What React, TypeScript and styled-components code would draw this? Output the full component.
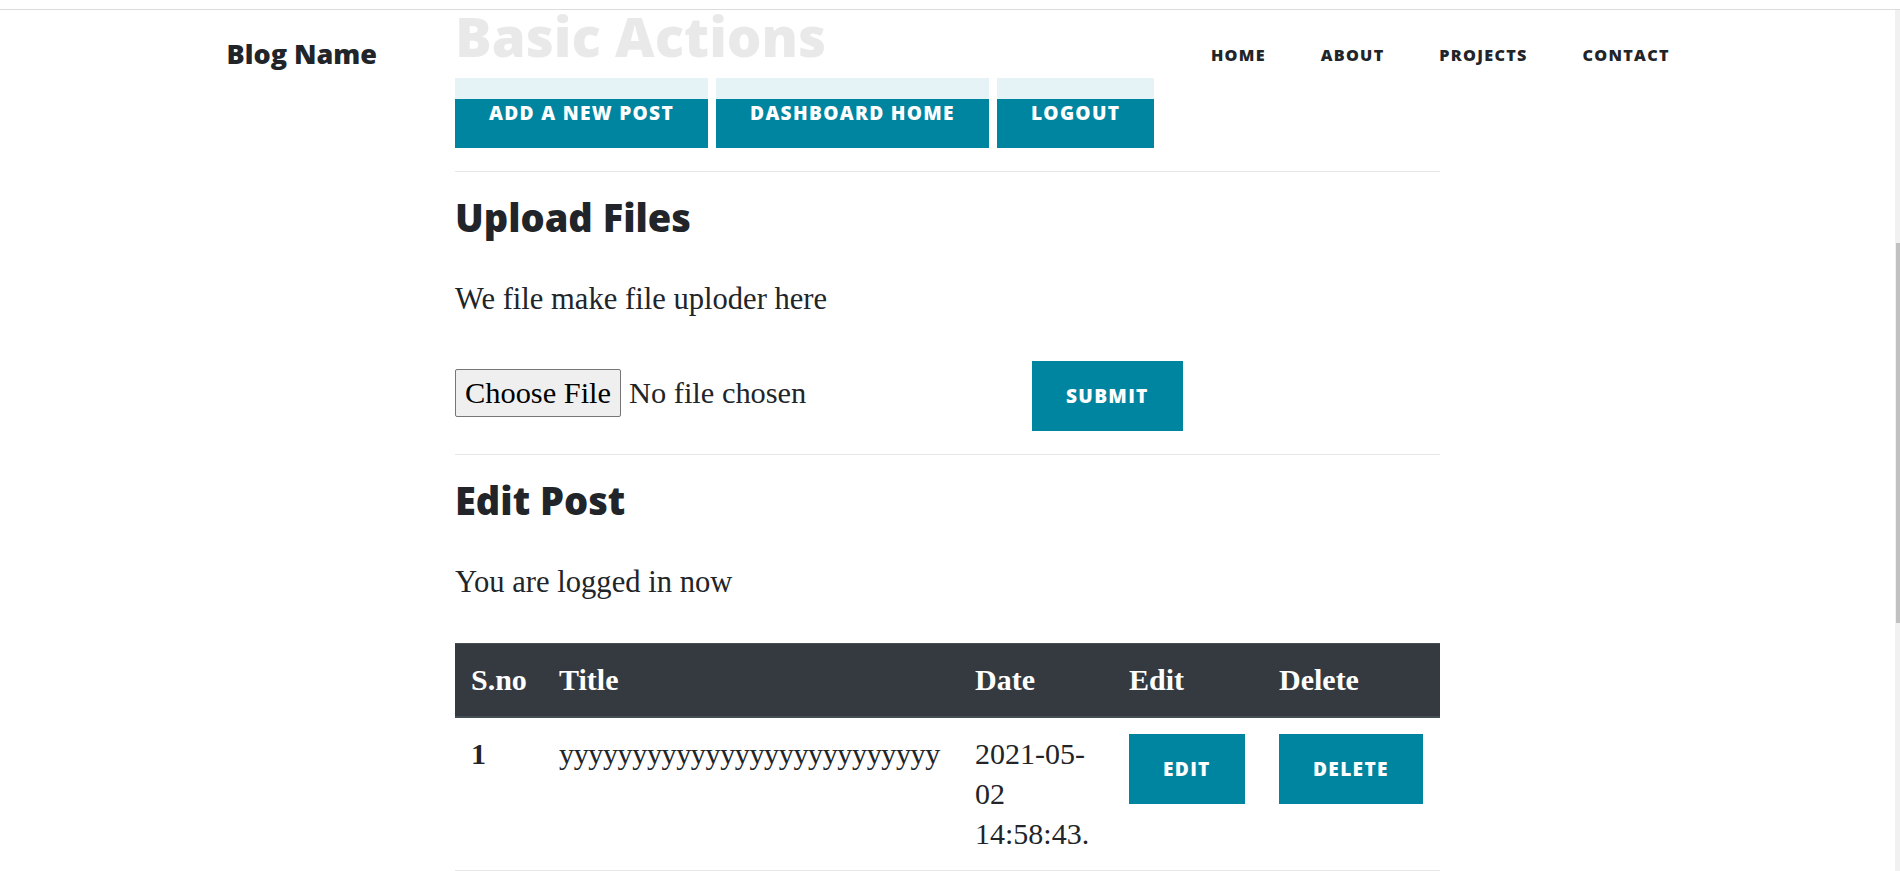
import React from "react";
import styled, { createGlobalStyle } from "styled-components";

const TEAL = "#0085a1";
const INK = "#212529";

const GlobalStyle = createGlobalStyle`
  html, body {
    margin: 0;
    padding: 0;
    height: 100%;
    overflow: hidden;
    background: #ffffff;
  }
  body {
    font-family: "Liberation Serif", "Times New Roman", serif;
    color: ${INK};
  }
  * { box-sizing: border-box; }
`;

const Frame = styled.div`
  height: 100vh;
  display: flex;
  flex-direction: column;
`;

const TopStrip = styled.div`
  height: 10px;
  flex: none;
  background: #ffffff;
  border-bottom: 1px solid #dcdcdc;
`;

const Body = styled.div`
  flex: 1;
  min-height: 0;
  display: flex;
`;

const Viewport = styled.div`
  flex: 1;
  position: relative;
  overflow: hidden;
`;

const ScrollTrack = styled.div`
  width: 5px;
  flex: none;
  background: #f1f1f1;
  display: flex;
  flex-direction: column;
  align-items: flex-end;
`;

const ScrollThumb = styled.div`
  width: 4px;
  height: 380px;
  margin-top: 233px;
  background: #c1c1c1;
`;

const NavBar = styled.nav`
  position: absolute;
  top: 0;
  left: 0;
  right: 0;
  height: 89px;
  background: rgba(255, 255, 255, 0.9);
  z-index: 10;
`;

const NavInner = styled.div`
  width: 1442px;
  height: 100%;
  margin: 0 auto;
  display: flex;
  align-items: center;
  justify-content: space-between;
`;

const Brand = styled.a`
  font-family: "Open Sans", "Liberation Sans", sans-serif;
  font-weight: 800;
  font-size: 27px;
  line-height: 1;
  color: ${INK};
  text-decoration: none;
  margin-bottom: 3px;
`;

const NavList = styled.ul`
  list-style: none;
  margin: 0;
  padding: 0;
  display: flex;
  gap: 56px;
`;

const NavLink = styled.a`
  font-family: "Open Sans", "Liberation Sans", sans-serif;
  font-weight: 800;
  font-size: 16.2px;
  letter-spacing: 1.3px;
  text-transform: uppercase;
  color: ${INK};
  text-decoration: none;
  margin-right: -1.3px;
`;

const Content = styled.main`
  width: 985px;
  margin: 0 auto;
`;

const PageTitle = styled.h1`
  font-family: "Open Sans", "Liberation Sans", sans-serif;
  font-weight: 800;
  font-size: 54.5px;
  line-height: 53px;
  margin: 0;
  color: ${INK};
`;

const ActionRow = styled.div`
  display: flex;
  gap: 8px;
  margin-top: 15px;
`;

const Button = styled.button`
  height: 70px;
  padding: 0 34px;
  display: inline-flex;
  align-items: center;
  justify-content: center;
  vertical-align: top;
  border: none;
  border-radius: 0;
  background: ${TEAL};
  color: #ffffff;
  font-family: "Open Sans", "Liberation Sans", sans-serif;
  font-weight: 800;
  font-size: 19.15px;
  letter-spacing: 1.3px;
  text-transform: uppercase;
  cursor: pointer;
  white-space: nowrap;
`;

const Rule = styled.hr`
  margin: 23px 0 0;
  border: 0;
  border-top: 1px solid #e6e6e6;
  height: 0;
`;

const SectionTitle = styled.h2`
  font-family: "Open Sans", "Liberation Sans", sans-serif;
  font-weight: 800;
  font-size: 38px;
  line-height: 48px;
  margin: 21px 0 0;
  color: ${INK};
`;

const Text = styled.p`
  font-size: 30.6px;
  line-height: 40px;
  margin: 38px 0 0;
`;

const UploadForm = styled.form`
  display: flex;
  align-items: flex-start;
  gap: 4px;
  margin-top: 42px;
`;

const FileInput = styled.input.attrs({ type: "file" })`
  width: 573px;
  height: 48px;
  margin-top: 8px;
  font-family: "Liberation Serif", "Times New Roman", serif;
  font-size: 30.4px;
  line-height: 46px;
  color: ${INK};

  &::file-selector-button {
    height: 48px;
    padding: 0 9px;
    margin-right: 8px;
    border: 1px solid #767676;
    border-radius: 2px;
    background: #efefef;
    color: #000000;
    font: inherit;
  }
`;

const PostTable = styled.table`
  width: 100%;
  margin-top: 41px;
  border-collapse: collapse;
  table-layout: fixed;
`;

const HeadCell = styled.th`
  background: #343a40;
  color: #ffffff;
  font-weight: 700;
  font-size: 30px;
  line-height: 40px;
  padding: 16px;
  text-align: left;
  border-top: 1px solid #454d55;
  border-bottom: 2px solid #454d55;
`;

const Cell = styled.td<{ $bold?: boolean; $tight?: boolean }>`
  font-size: 30px;
  line-height: 40px;
  padding: 16px;
  vertical-align: top;
  font-weight: ${(p) => (p.$bold ? 700 : 400)};
  letter-spacing: ${(p) => (p.$tight ? "-0.35px" : "normal")};
  border-bottom: 1px solid #e6e6e6;
`;

const columns = [
  { label: "S.no", width: 88 },
  { label: "Title", width: 416 },
  { label: "Date", width: 154 },
  { label: "Edit", width: 150 },
  { label: "Delete", width: 177 },
];

const navItems = ["Home", "About", "Projects", "Contact"];

export default function App() {
  return (
    <>
      <GlobalStyle />
      <Frame>
        <TopStrip />
        <Body>
          <Viewport>
            <NavBar>
              <NavInner>
                <Brand href="#">Blog Name</Brand>
                <NavList>
                  {navItems.map((item) => (
                    <li key={item}>
                      <NavLink href="#">{item}</NavLink>
                    </li>
                  ))}
                </NavList>
              </NavInner>
            </NavBar>
            <Content>
              <PageTitle>Basic Actions</PageTitle>
              <ActionRow>
                <Button>Add a new post</Button>
                <Button>Dashboard Home</Button>
                <Button>Logout</Button>
              </ActionRow>
              <Rule />
              <SectionTitle>Upload Files</SectionTitle>
              <Text>We file make file uploder here</Text>
              <UploadForm onSubmit={(e) => e.preventDefault()}>
                <FileInput />
                <Button type="submit">Submit</Button>
              </UploadForm>
              <Rule />
              <SectionTitle>Edit Post</SectionTitle>
              <Text>You are logged in now</Text>
              <PostTable>
                <colgroup>
                  {columns.map((c) => (
                    <col key={c.label} style={{ width: c.width }} />
                  ))}
                </colgroup>
                <thead>
                  <tr>
                    {columns.map((c) => (
                      <HeadCell key={c.label}>{c.label}</HeadCell>
                    ))}
                  </tr>
                </thead>
                <tbody>
                  <tr>
                    <Cell $bold>1</Cell>
                    <Cell $tight>yyyyyyyyyyyyyyyyyyyyyyyyyy</Cell>
                    <Cell>2021-05-02 14:58:43.</Cell>
                    <Cell>
                      <Button>Edit</Button>
                    </Cell>
                    <Cell>
                      <Button>Delete</Button>
                    </Cell>
                  </tr>
                </tbody>
              </PostTable>
            </Content>
          </Viewport>
          <ScrollTrack>
            <ScrollThumb />
          </ScrollTrack>
        </Body>
      </Frame>
    </>
  );
}
